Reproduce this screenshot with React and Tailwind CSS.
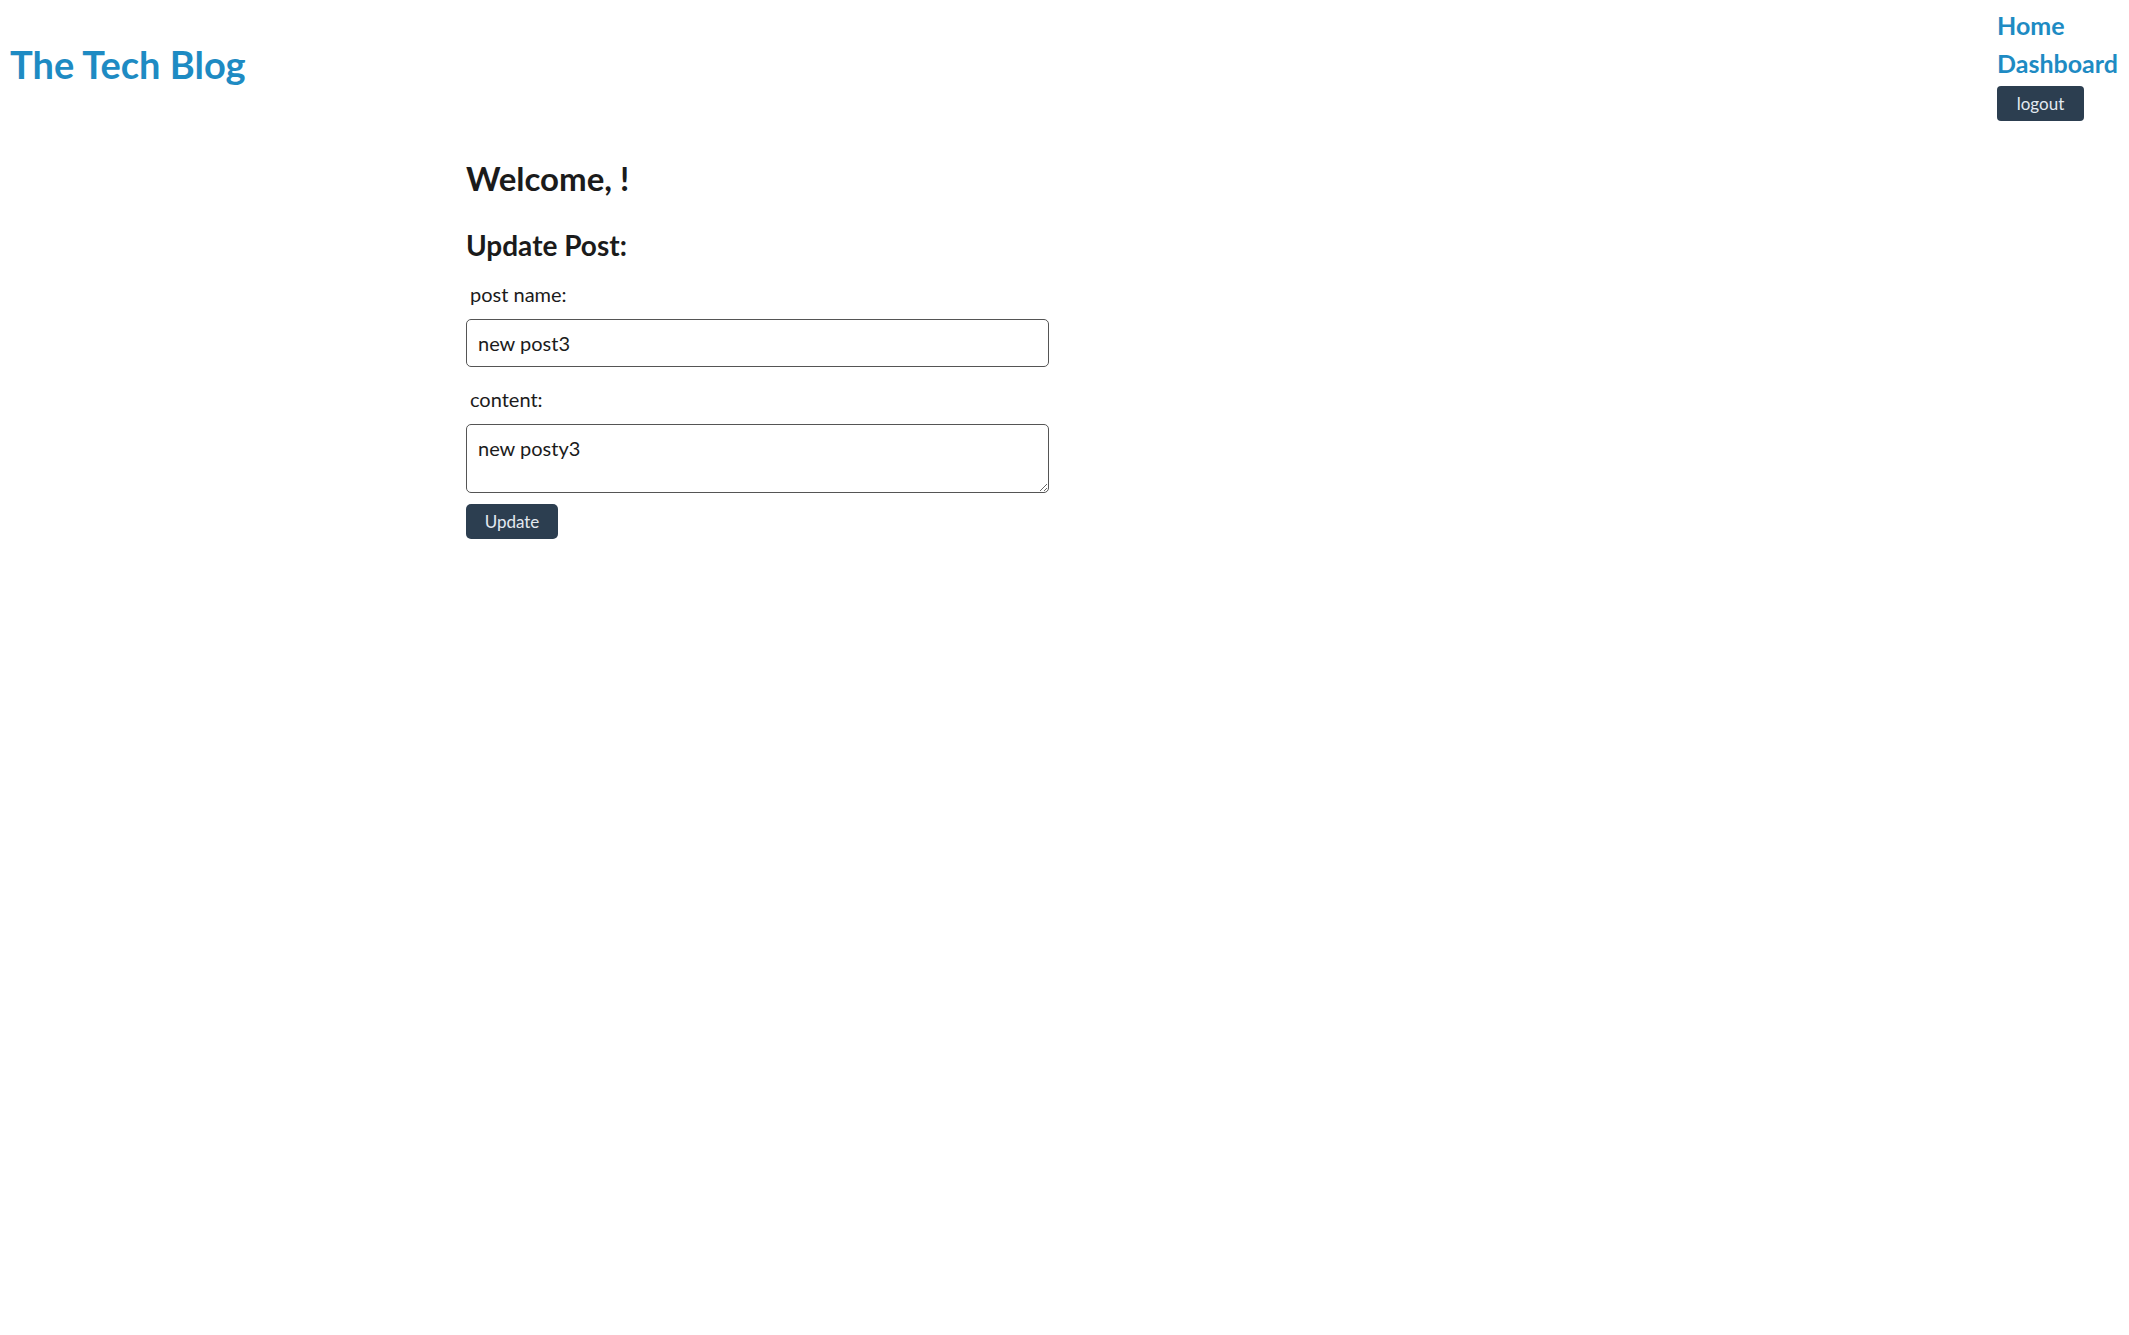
export default function App() {
  return (
    <div className="min-h-screen bg-white text-[#1b1b1b]" style={{ fontFamily: 'Lato, "Noto Sans", sans-serif' }}>
      <header className="flex justify-between items-start">
        <h1 className="mt-[45px] ml-[10px] text-[38px] font-bold leading-[38px] text-[#1e8bc3]">The Tech Blog</h1>
        <nav className="flex flex-col items-start w-[132px] pt-[6px]">
          <a href="#" className="text-[25px] font-bold leading-[38px] text-[#1e8bc3]">Home</a>
          <a href="#" className="text-[25px] font-bold leading-[38px] text-[#1e8bc3]">Dashboard</a>
          <button className="mt-[4px] w-[87px] h-[35px] rounded-[4px] bg-[#2c3e50] text-[17px] text-[#e3e9f0]">logout</button>
        </nav>
      </header>

      <main className="ml-[466px] mt-[41px] w-[583px]">
        <h2 className="text-[33px] font-bold leading-[33px]">Welcome, !</h2>
        <h3 className="mt-[37px] text-[28px] font-bold leading-[27px]">Update Post:</h3>
        <form className="flex flex-col mt-[23px]">
          <label className="ml-[4px] text-[20px] leading-[24px]">post name:</label>
          <input
            defaultValue="new post3"
            className="mt-[13px] h-[48px] border border-[#555] rounded-[5px] px-[11px] text-[20px] outline-none"
          />
          <label className="ml-[4px] mt-[20px] text-[20px] leading-[24px]">content:</label>
          <textarea
            defaultValue="new posty3"
            className="mt-[13px] h-[69px] border border-[#555] rounded-[5px] px-[11px] pt-[11px] text-[20px] leading-[24px] outline-none"
          />
          <button type="button" className="mt-[11px] w-[92px] h-[35px] rounded-[5px] bg-[#2c3e50] text-[17px] text-[#e3e9f0]">Update</button>
        </form>
      </main>
    </div>
  );
}
